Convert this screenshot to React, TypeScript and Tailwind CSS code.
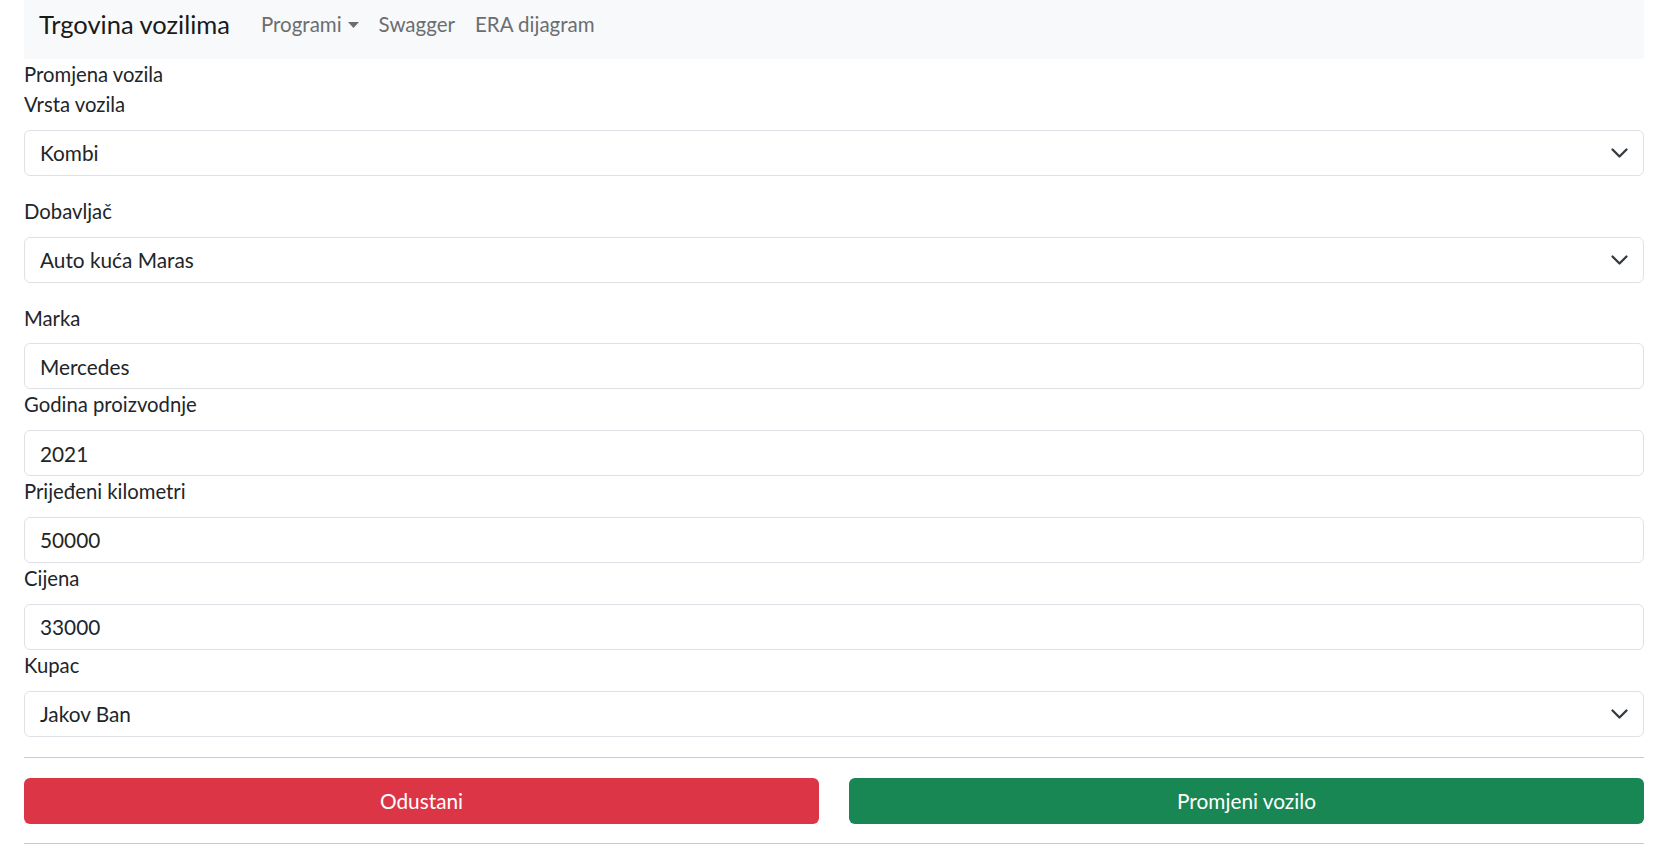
import React from 'react';

const font = { fontFamily: '"Segoe UI", Lato, "Noto Sans", sans-serif' };

interface FieldProps {
    label: string;
    value: string;
    select?: boolean;
    last?: boolean;
}

const Chevron: React.FC = () => (
    <svg
        className="absolute right-[15px] top-1/2 -translate-y-1/2 pointer-events-none"
        width="19"
        height="14"
        viewBox="0 0 16 12"
        fill="none"
    >
        <path d="m2 3 6 6 6-6" stroke="#343a40" strokeWidth="2" strokeLinecap="round" strokeLinejoin="round" />
    </svg>
);

const Field: React.FC<FieldProps> = ({ label, value, select, last }) => {
    return (
        <div className={select && !last ? 'mb-[20px]' : ''}>
            <label className="block h-[30px] leading-[30px] mb-[10.8px] text-[20.3px] text-[#212529]">{label}</label>
            {select ? (
                <div className="relative">
                    <select
                        className="w-full h-[46px] appearance-none rounded-[6px] border border-[#dee2e6] bg-white pl-[15px] pr-[50px] text-[20.8px] text-[#212529] outline-none"
                        defaultValue={value}
                    >
                        <option>{value}</option>
                    </select>
                    <Chevron />
                </div>
            ) : (
                <input
                    className="block w-full h-[46px] rounded-[6px] border border-[#dee2e6] bg-white px-[15px] text-[20.8px] text-[#212529] outline-none"
                    defaultValue={value}
                    readOnly
                />
            )}
        </div>
    );
};

export default function App() {
    return (
        <div className="bg-white pl-[24px] pr-[27px]" style={font}>
            {/* navbar */}
            <nav className="h-[59px] bg-[#f8f9fa] flex items-center pb-[10px] pl-[15px]">
                <span className="text-[25.5px] text-[#1a1a1a] mr-[31px]">Trgovina vozilima</span>
                <div className="flex items-center text-[20.5px] text-[#6b6e71]">
                    <span className="flex items-center">
                        Programi
                        <svg className="ml-[6px] mt-[1px]" width="11" height="6" viewBox="0 0 11 6">
                            <path d="M0 0h11L5.5 6z" fill="#6b6e71" />
                        </svg>
                    </span>
                    <span className="ml-[20px]">Swagger</span>
                    <span className="ml-[20px]">ERA dijagram</span>
                </div>
            </nav>

            <div className="h-[30px] leading-[30px] text-[20.3px] text-[#212529]">Promjena vozila</div>

            <Field label="Vrsta vozila" value="Kombi" select />
            <Field label="Dobavljač" value="Auto kuća Maras" select />
            <Field label="Marka" value="Mercedes" />
            <Field label="Godina proizvodnje" value="2021" />
            <Field label="Prijeđeni kilometri" value="50000" />
            <Field label="Cijena" value="33000" />
            <Field label="Kupac" value="Jakov Ban" select last />

            <hr className="mt-[20px] border-0 border-t border-[#c9cacb]" />

            <div className="grid grid-cols-2 gap-[30px] mt-[20px]">
                <button className="h-[46px] rounded-[6px] bg-[#dc3545] text-white text-[20.8px]">Odustani</button>
                <button className="h-[46px] rounded-[6px] bg-[#198754] text-white text-[20.8px]">Promjeni vozilo</button>
            </div>

            <hr className="mt-[19px] border-0 border-t border-[#c9cacb]" />
        </div>
    );
}
